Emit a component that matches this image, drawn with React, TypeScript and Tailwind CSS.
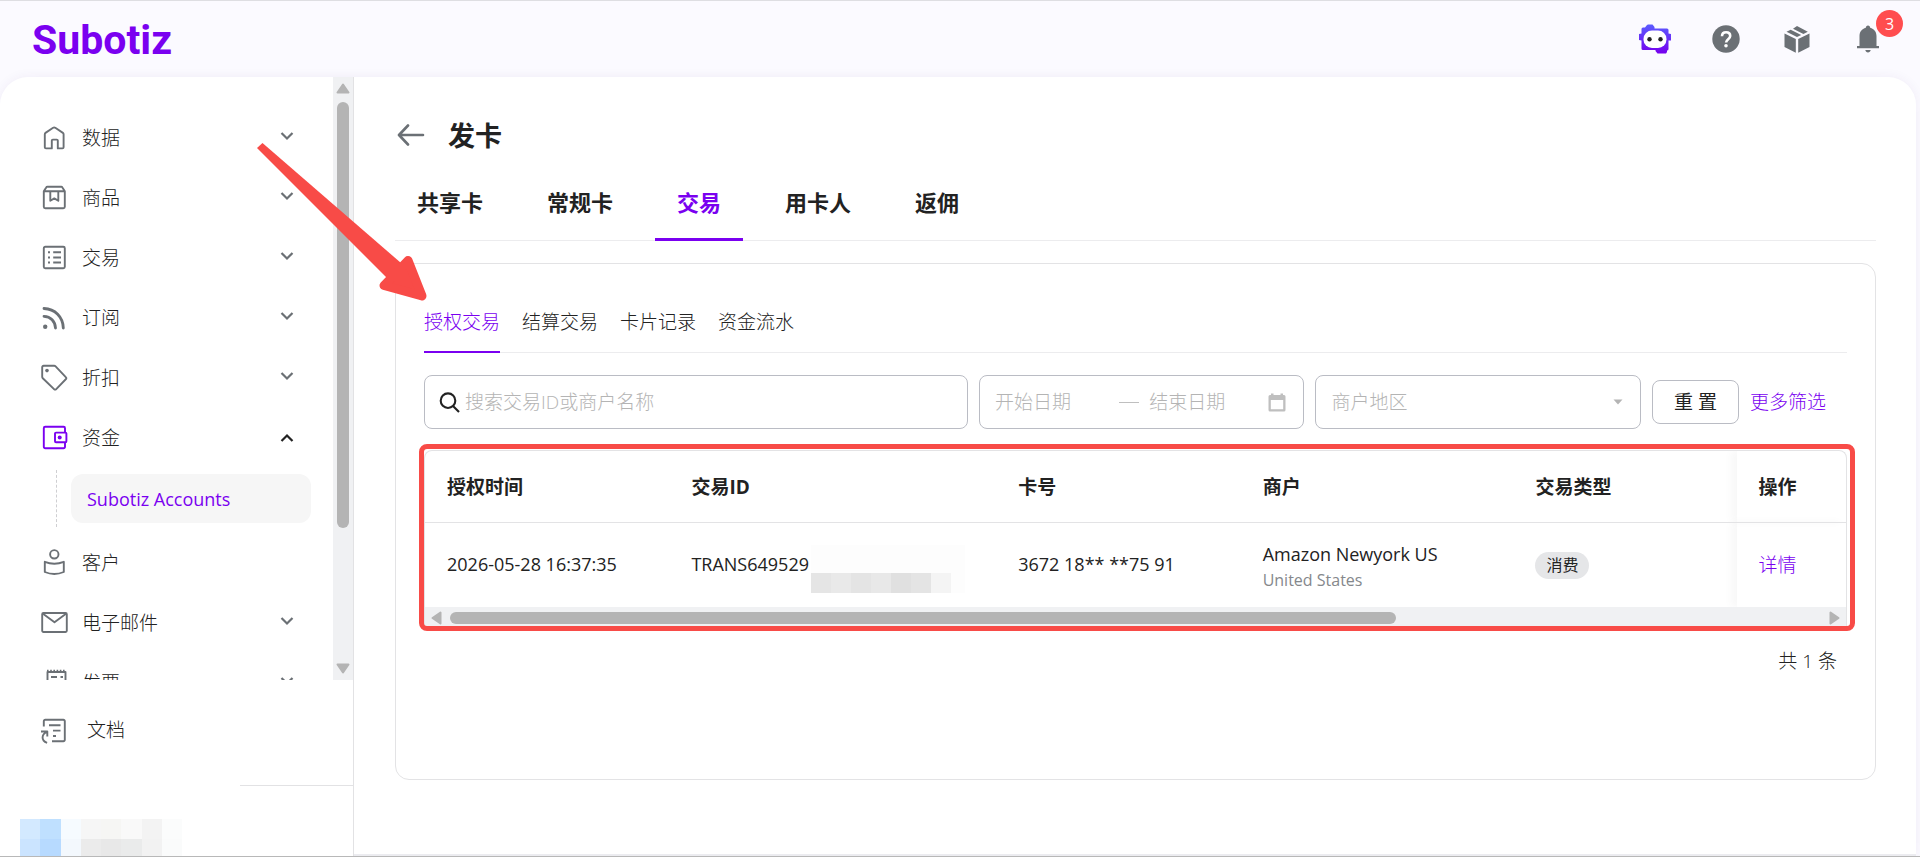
import type { ReactNode } from 'react'

interface NavItem {
  label: string
  icon: ReactNode
  expandable?: boolean
  open?: boolean
  children?: string[]
}

function NavIcon({ children, active }: { children: ReactNode; active?: boolean }) {
  return (
    <svg
      width="26"
      height="26"
      viewBox="0 0 26 26"
      fill="none"
      stroke={active ? '#7a00f0' : '#6b7075'}
      strokeWidth="1.9"
      strokeLinejoin="round"
      className="shrink-0 overflow-visible"
      aria-hidden="true"
    >
      {children}
    </svg>
  )
}

function Chevron({ open }: { open?: boolean }) {
  return (
    <svg
      width="14"
      height="10"
      viewBox="0 0 14 10"
      fill="none"
      stroke={open ? '#222222' : '#6b7075'}
      strokeWidth="2.2"
      className={open ? '' : '-mt-1'}
      aria-hidden="true"
    >
      <path d={open ? 'M1.5 8 7 2.5 12.5 8' : 'M1.5 2 7 7.5 12.5 2'} />
    </svg>
  )
}

const navItems: NavItem[] = [
  {
    label: '数据',
    expandable: true,
    icon: (
      <NavIcon>
        <path d="M3.8 22.2V9.2a1.6 1.6 0 0 1 .7-1.3l7.6-5.1a2 2 0 0 1 2.2 0l7.6 5.1a1.6 1.6 0 0 1 .7 1.3v13a1.2 1.2 0 0 1-1.2 1.2h-4.6v-7.8a1 1 0 0 0-1-1h-4a1 1 0 0 0-1 1v7.8H5a1.2 1.2 0 0 1-1.2-1.2Z" />
      </NavIcon>
    ),
  },
  {
    label: '商品',
    expandable: true,
    icon: (
      <NavIcon>
        <path d="M2.8 6.3 5.2 2.4a1.4 1.4 0 0 1 1.2-.7h13.8a1.4 1.4 0 0 1 1.2.7l2.4 3.9v15.4a1.5 1.5 0 0 1-1.5 1.5h-18a1.5 1.5 0 0 1-1.5-1.5ZM2.8 6.3h21" />
        <path d="M9.3 6.5v9.3l4-2.4 4 2.4V6.5" />
      </NavIcon>
    ),
  },
  {
    label: '交易',
    expandable: true,
    icon: (
      <NavIcon>
        <rect x="2.8" y="1.8" width="21" height="21.4" rx="1.5" />
        <path d="M7 7.2h2M7 12.4h2M7 17.6h2M12.2 7.2h7.8M12.2 12.4h7.8M12.2 17.6h7.8" strokeWidth="2" />
      </NavIcon>
    ),
  },
  {
    label: '订阅',
    expandable: true,
    icon: (
      <NavIcon>
        <circle cx="4.2" cy="21.8" r="2.2" fill="#6b7075" stroke="none" />
        <path d="M3 3.5c11 .3 19 8.5 19.3 19.5M3 11.3c6.6.2 11.2 4.9 11.5 11.7" strokeWidth="2.8" strokeLinecap="round" />
      </NavIcon>
    ),
  },
  {
    label: '折扣',
    expandable: true,
    icon: (
      <NavIcon>
        <path d="M1.2 2.2a1.4 1.4 0 0 1 1.4-1.4h10.6a2 2 0 0 1 1.4.6L25 12.3a1.2 1.2 0 0 1 0 1.7L15 24.3a1.2 1.2 0 0 1-1.7 0L1.8 13.2a2 2 0 0 1-.6-1.4Z" />
        <circle cx="6" cy="5.6" r="1.8" fill="#6b7075" stroke="none" />
      </NavIcon>
    ),
  },
  {
    label: '资金',
    expandable: true,
    open: true,
    children: ['Subotiz Accounts'],
    icon: (
      <NavIcon active>
        <path d="M24 7.6V3.2a1.4 1.4 0 0 0-1.400-1.400H4.200a1.400 1.400 0 0 0-1.400 1.400v18.600a1.400 1.400 0 0 0 1.400 1.400h18.400a1.400 1.400 0 0 0 1.400-1.400v-4.600" />
        <rect x="14" y="7.6" width="11.4" height="9.6" rx="1" />
        <circle cx="18.700" cy="12.400" r="2" fill="#7a00f0" stroke="none" />
      </NavIcon>
    ),
  },
  {
    label: '客户',
    icon: (
      <NavIcon>
        <circle cx="13.3" cy="4.3" r="4.2" />
        <path d="M3.8 11.8c6 2.400 13 2.400 19 0V22c-6 2.600-13 2.600-19 0Z" />
      </NavIcon>
    ),
  },
  {
    label: '电子邮件',
    expandable: true,
    icon: (
      <NavIcon>
        <rect x="1.2" y="3" width="24.6" height="19" rx="1.2" />
        <path d="m2 3.800 11.500 8.400L25 3.800" />
      </NavIcon>
    ),
  },
  {
    label: '发票',
    expandable: true,
    icon: (
      <NavIcon>
        <path d="M6.500 24V2h18v22Z" />
        <path d="M6 .8h19" strokeDasharray="1.6 1.6" strokeWidth="2" />
        <path d="M10 7h6M19.500 7h2.500M10 12h6" strokeWidth="2" />
      </NavIcon>
    ),
  },
]

const mainTabs = ['共享卡', '常规卡', '交易', '用卡人', '返佣']
const subTabs = ['授权交易', '结算交易', '卡片记录', '资金流水']

function Header() {
  return (
    <header className="flex h-[77px] shrink-0 items-center justify-between border-t border-[#dedee2] pl-8 pr-10">
      <a href="#" className="pt-0.5 font-['Roboto',sans-serif] text-[41px] font-bold leading-none text-[#7a00f0]">
        Subotiz
      </a>
      <div className="flex items-center gap-[41px]">
        <button aria-label="助手">
          <svg width="32" height="30" viewBox="0 0 32 30">
            <defs>
              <linearGradient id="bot" x1="0" y1="0" x2="0" y2="1">
                <stop offset="0" stopColor="#5a5cff" />
                <stop offset="1" stopColor="#7600ee" />
              </linearGradient>
            </defs>
            <path
              fill="url(#bot)"
              d="M8 1 9 .5h4.500L15.500 3v1.500H28a1.500 1.500 0 0 1 1.500 1.500v3.500L32 10v6.500h-2.500V25a1.500 1.500 0 0 1-1.500 1.500V28l-1 1.500h-8.500L16.500 27v-1H4a1.500 1.500 0 0 1-1.500-1.500v-8L0 16v-6l2.500-.5V5a1.500 1.500 0 0 1 1.500-1.500h2Z"
            />
            <rect x="4.5" y="6.5" width="23" height="17.500" rx="8.500" fill="#fff" />
            <circle cx="10.500" cy="15.300" r="2.200" fill="#222" />
            <circle cx="21.500" cy="15.300" r="2.200" fill="#222" />
          </svg>
        </button>
        <button aria-label="帮助">
          <svg width="28" height="28" viewBox="0 0 28 28">
            <circle cx="14" cy="14" r="13.700" fill="#6b7075" />
            <path d="M10 11.200c0-2.400 1.700-4 4.100-4s4.100 1.500 4.100 3.800c0 3.100-4.100 3.300-4.100 6.500" fill="none" stroke="#fff" strokeWidth="2.600" />
            <circle cx="14" cy="20.800" r="1.800" fill="#fff" />
          </svg>
        </button>
        <button aria-label="应用" className="ml-0.5">
          <svg width="28" height="28" viewBox="0 0 28 28" fill="#6b7075">
            <path d="M1.500 8.500 12.800 14v13.800L1.500 22ZM15.200 14 26.500 8.500V22l-11.300 5.800Z" />
            <path d="m3.500 6.800 4.200-2 10.500 5.200-4.200 2ZM10 3.700 14 1l10.800 5.700-4.400 2.200Z" />
          </svg>
        </button>
        <button aria-label="通知" className="relative ml-1">
          <svg width="24" height="28" viewBox="0 0 24 28" fill="#6b7075">
            <path d="M12 .5c1.300 0 2.200 1 2.200 2.300 3.900 1 6.300 4.200 6.300 8.200v10H23v2.300H1V21h2.500V11c0-4 2.400-7.200 6.300-8.200C9.800 1.500 10.700.5 12 .5ZM9.300 25h5.400c-.3 1.600-1.300 2.500-2.700 2.500S9.600 26.600 9.300 25Z" />
          </svg>
          <span className="absolute -top-[15px] left-5 flex size-[27px] items-center justify-center rounded-full bg-[#ff4d4f] text-[16px] leading-none text-white">
            3
          </span>
        </button>
      </div>
    </header>
  )
}

function Sidebar() {
  return (
    <aside className="flex w-[354px] shrink-0 flex-col border-r border-[#e2e2e4]">
      <div className="flex min-h-0 flex-1 overflow-hidden">
        <nav className="min-w-0 flex-1 pt-[31px]">
          <ul>
            {navItems.map((item) => (
              <li key={item.label}>
                <button className="flex h-[60px] w-full items-center pl-[41px] pr-[39px] text-[19px] font-light">
                  {item.icon}
                  <span className="ml-[15px] flex-1 pt-px text-left">{item.label}</span>
                  {item.expandable && <Chevron open={item.open} />}
                </button>
                {item.children && (
                  <div className="ml-14 mt-0.5 mb-1.5 border-l border-dashed border-[#cfcfd2] py-1 pl-[14px] pr-[22px]">
                    {item.children.map((child) => (
                      <a
                        key={child}
                        href="#"
                        className="flex h-[49px] items-center rounded-xl bg-[#f6f6f6] px-4 pt-0.5 text-[18px] text-[#7a00f0]"
                      >
                        {child}
                      </a>
                    ))}
                  </div>
                )}
              </li>
            ))}
          </ul>
        </nav>
        <div className="flex w-5 flex-col items-center bg-[#f0f1f3] pb-1.5 pt-1.5" aria-hidden="true">
          <svg width="14" height="11" viewBox="0 0 14 11">
            <path d="M7 1.500 12.500 9.500h-11Z" fill="#b4b4b4" stroke="#b4b4b4" strokeWidth="2" strokeLinejoin="round" />
          </svg>
          <div className="mt-2 flex min-h-0 w-3 flex-1 flex-col">
            <div className="h-[76%] rounded-full bg-[#b4b4b4]" />
          </div>
          <svg width="14" height="11" viewBox="0 0 14 11">
            <path d="M7 9.500 12.500 1.500h-11Z" fill="#b4b4b4" stroke="#b4b4b4" strokeWidth="2" strokeLinejoin="round" />
          </svg>
        </div>
      </div>

      <a href="#" className="flex h-[105px] shrink-0 items-center pb-1 pl-[41px] text-[19px] font-light">
        <NavIcon>
          <path d="M2.800 8.500V3.200a1.400 1.400 0 0 1 1.400-1.400h18.200a1.400 1.400 0 0 1 1.400 1.400v18.600a1.400 1.400 0 0 1-1.400 1.400H11" />
          <path d="M8 7.200h11.500M12 12.600h7.500M12 18h3" />
          <path d="M0 13.500h6.300v5M6.300 13.800c-6 2-6.500 9-.2 11" />
        </NavIcon>
        <span className="ml-5">文档</span>
      </a>

      <div className="flex h-[71px] shrink-0 flex-col">
        <div className="flex">
          <div className="h-px w-[240px]" />
          <div className="h-px flex-1 bg-[#e2e2e4]" />
        </div>
        <div className="mt-[33px] ml-5 grid w-[162px] flex-1 grid-cols-8 grid-rows-[20px_1fr]" aria-hidden="true">
          <div className="bg-[#d3e9ff]" />
          <div className="bg-[#bfe0ff]" />
          <div className="bg-[#f6fbff]" />
          <div className="bg-[#f6f6f6]" />
          <div className="bg-[#f6f6f4]" />
          <div className="bg-[#f9f9f9]" />
          <div className="bg-[#f3f3f3]" />
          <div className="bg-[#fbfcfc]" />
          <div className="bg-[#cbe4ff]" />
          <div className="bg-[#b7daff]" />
          <div className="bg-[#f3f8fd]" />
          <div className="bg-[#ebebeb]" />
          <div className="bg-[#e8e8e8]" />
          <div className="bg-[#eaebeb]" />
          <div className="bg-[#f2f2f2]" />
          <div className="bg-[#fafbfb]" />
        </div>
      </div>
    </aside>
  )
}

function Filters() {
  return (
    <form className="mt-[22px] grid grid-cols-[545fr_325fr_327fr_87px_auto] items-center gap-[11px] pr-[21px]">
      <label className="flex h-[54px] min-w-0 items-center rounded-lg border border-[#babcc4] pl-[14px]">
        <svg width="21" height="21" viewBox="0 0 21 21" fill="none" stroke="#222" strokeWidth="2.1" aria-hidden="true">
          <circle cx="9" cy="8.700" r="7.300" />
          <path d="m14 14 6 6" />
        </svg>
        <input
          aria-label="搜索"
          placeholder="搜索交易ID或商户名称"
          className="ml-[5px] min-w-0 flex-1 text-[19px] font-light outline-none placeholder:text-[#b4b4b4]"
        />
      </label>
      <div className="flex h-[54px] min-w-0 items-center rounded-lg border border-[#babcc4] pl-[15px] pr-[17px]">
        <input
          aria-label="开始日期"
          placeholder="开始日期"
          className="w-0 flex-1 text-[19px] font-light outline-none placeholder:text-[#b4b4b4]"
        />
        <span className="ml-1.5 mr-2.5 h-px w-5 bg-[#bfbfbf]" />
        <input
          aria-label="结束日期"
          placeholder="结束日期"
          className="w-0 flex-1 text-[19px] font-light outline-none placeholder:text-[#b4b4b4]"
        />
        <svg width="18" height="19" viewBox="0 0 18 19" aria-hidden="true">
          <path fill="#bfbfbf" fillRule="evenodd" d="M3 .5h2.500V2h7V.5H15V2h1a1.500 1.500 0 0 1 1.500 1.500V17a1.500 1.500 0 0 1-1.500 1.500H2A1.500 1.500 0 0 1 .5 17V3.500A1.500 1.500 0 0 1 2 2h1ZM2.800 7v9.300h12.400V7Z" />
        </svg>
      </div>
      <div className="relative flex h-[54px] min-w-0 items-center">
        <select
          aria-label="商户地区"
          defaultValue=""
          className="size-full appearance-none rounded-lg border border-[#babcc4] bg-transparent pl-4 text-[19px] font-light text-[#b4b4b4] outline-none"
        >
          <option value="">商户地区</option>
        </select>
        <svg width="10" height="6" viewBox="0 0 10 6" className="pointer-events-none absolute right-[18px]" aria-hidden="true">
          <path d="M.5.5h9L5 5.500Z" fill="#b4b4b4" />
        </svg>
      </div>
      <button type="button" className="h-11 rounded-lg border border-[#babcc4] text-[19px]">
        重 置
      </button>
      <a href="#" className="text-[19px] font-light text-[#7a00f0]">
        更多筛选
      </a>
    </form>
  )
}

function TransactionTable() {
  return (
    <div className="relative mt-[21px]">
      <div className="overflow-hidden rounded-t-lg border border-b-0 border-[#e3e3e5]">
        <table className="w-full table-fixed text-left text-[19px]">
          <colgroup>
            <col className="w-[17.2%]" />
            <col className="w-[23%]" />
            <col className="w-[17.2%]" />
            <col className="w-[19.2%]" />
            <col />
            <col className="w-[7.7%]" />
          </colgroup>
          <thead>
            <tr className="h-[71px] border-b border-[#e3e3e5]">
              <th className="pl-[22px] pt-0.5">授权时间</th>
              <th className="pl-[22px] pt-0.5">交易ID</th>
              <th className="pl-[22px] pt-0.5">卡号</th>
              <th className="pl-[22px] pt-0.5">商户</th>
              <th className="pl-[22px] pt-0.5">交易类型</th>
              <th className="pl-[22px] pt-0.5 shadow-[-6px_0_8px_rgba(0,0,0,0.03)]">操作</th>
            </tr>
          </thead>
          <tbody>
            <tr className="h-[85px] text-[18px]">
              <td className="pl-[22px]">2026-05-28 16:37:35</td>
              <td className="pl-[22px]">
                <div className="flex items-center">
                  TRANS649529
                  <div className="ml-0.5 -mb-2 flex h-12 w-[154px] flex-col bg-[#fdfdfd]" aria-hidden="true">
                    <div className="mt-auto flex h-5">
                      <div className="w-5 bg-[#e5e5e5]" />
                      <div className="w-5 bg-[#e9e9e9]" />
                      <div className="w-5 bg-[#e4e4e4]" />
                      <div className="w-5 bg-[#e8e8e8]" />
                      <div className="w-5 bg-[#e0e0e0]" />
                      <div className="w-5 bg-[#e4e4e4]" />
                      <div className="w-5 bg-[#f4f4f4]" />
                    </div>
                  </div>
                </div>
              </td>
              <td className="pl-[22px]">3672 18** **75 91</td>
              <td className="pl-[22px] pt-0.5">
                <p className="leading-7">Amazon Newyork US</p>
                <p className="text-[16px] leading-6 text-[#85888c]">United States</p>
              </td>
              <td className="pl-[22px]">
                <span className="inline-flex h-[27px] items-center rounded-full bg-[#e5e6e8] px-[11px] text-[16px]">
                  消费
                </span>
              </td>
              <td className="pl-[22px] shadow-[-6px_0_8px_rgba(0,0,0,0.03)]">
                <a href="#" className="text-[19px] font-light text-[#7a00f0]">
                  详情
                </a>
              </td>
            </tr>
          </tbody>
        </table>
        <div className="flex h-5 items-center bg-[#f0f1f3] px-1.5 pt-0.5" aria-hidden="true">
          <svg width="11" height="14" viewBox="0 0 11 14">
            <path d="M1.500 7 9.500 1.500v11Z" fill="#b4b4b4" stroke="#b4b4b4" strokeWidth="2" strokeLinejoin="round" />
          </svg>
          <div className="mx-2 h-3 flex-1">
            <div className="h-full w-[69%] rounded-full bg-[#b4b4b4]" />
          </div>
          <svg width="11" height="14" viewBox="0 0 11 14">
            <path d="M9.500 7 1.500 1.500v11Z" fill="#b4b4b4" stroke="#b4b4b4" strokeWidth="2" strokeLinejoin="round" />
          </svg>
        </div>
      </div>
      {/* Highlight frame */}
      <div className="pointer-events-none absolute -bottom-1 -left-[5px] -right-2 -top-1.5 rounded-lg border-[5px] border-[#f84b47]" />
    </div>
  )
}

export default function App() {
  return (
    <div className="relative flex h-screen flex-col overflow-hidden border-b border-[#b8b8b8] bg-[#fbfaff] font-['Open_Sans','Noto_Sans_CJK_SC',sans-serif] text-[#222222]">
      <Header />
      <div className="mr-1 flex min-h-0 flex-1 overflow-hidden rounded-t-[28px] bg-white shadow-[0_0_12px_rgba(60,40,120,0.06)]">
        <Sidebar />
        <main className="flex min-w-0 flex-1 flex-col border-b-2 border-[#ececf0] pl-[41px] pr-10 pt-9">
          <div className="flex h-[46px] items-center gap-[23px]">
            <button aria-label="返回" className="ml-0.5">
              <svg width="28" height="24" viewBox="0 0 28 24" fill="none" stroke="#6b7075" strokeWidth="2.600" strokeLinecap="round" strokeLinejoin="round">
                <path d="M11 1.500 2 11 11 20.500M2.500 11H26" />
              </svg>
            </button>
            <h1 className="text-[27px] font-bold">发卡</h1>
          </div>

          <div role="tablist" className="mt-[7px] flex h-[75px] gap-5 border-b border-[#ececee]">
            {mainTabs.map((tab) => (
              <button
                key={tab}
                role="tab"
                aria-selected={tab === '交易'}
                className={
                  tab === '交易'
                    ? '-mb-px border-b-[3px] border-[#7a00f0] px-[22px] text-[22px] font-bold text-[#7a00f0]'
                    : '-mb-px border-b-[3px] border-transparent px-[22px] text-[22px] font-bold'
                }
              >
                {tab}
              </button>
            ))}
          </div>

          <section className="mt-[22px] mb-[74px] flex-1 rounded-[14px] border border-[#e3e3e5] px-7 pt-7">
            <div role="tablist" className="flex h-[61px] gap-[22px] border-b border-[#ececee]">
              {subTabs.map((tab, index) => (
                <button
                  key={tab}
                  role="tab"
                  aria-selected={index === 0}
                  className={
                    index === 0
                      ? '-mb-px border-b-2 border-[#7a00f0] pt-0.5 text-[19px] font-light text-[#7a00f0]'
                      : '-mb-px border-b-2 border-transparent pt-0.5 text-[19px] font-light'
                  }
                >
                  {tab}
                </button>
              ))}
            </div>
            <Filters />
            <TransactionTable />
            <p className="mt-5 pr-2.5 text-right text-[19px] font-light">共 1 条</p>
          </section>
        </main>
      </div>

      {/* Arrow pointing at the first sub tab */}
      <svg
        width="175"
        height="165"
        viewBox="0 0 175 165"
        className="pointer-events-none absolute left-[254px] top-[140px]"
        fill="#f84b47"
        stroke="#f84b47"
        strokeLinejoin="round"
        aria-hidden="true"
      >
        <path d="M3 8 8.500 3 147 123l-14 15Z" strokeWidth="0" />
        <path d="M154 120.500 168 156 130 145.500 Z" strokeWidth="9" />
      </svg>
    </div>
  )
}
